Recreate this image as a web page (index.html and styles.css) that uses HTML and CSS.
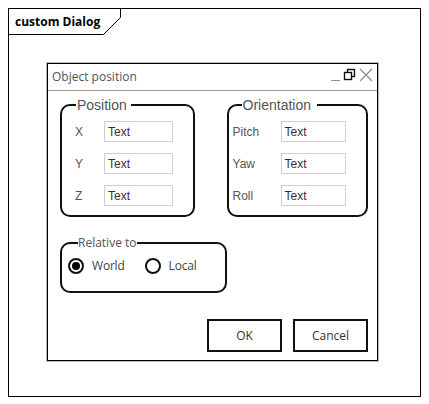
FILE: index.html
```html
<!DOCTYPE html>
<html lang="en">
<head>
<meta charset="utf-8">
<title>custom Dialog</title>
<link rel="stylesheet" href="styles.css">
</head>
<body>
<div class="frame">
  <div class="tab">
    <svg class="tab-outline" width="112" height="26" viewBox="0 0 112 26"><path d="M0 25.5H94.5L111.5 8.5V0" fill="none" stroke="#000" stroke-width="1"/></svg>
    <span class="tab-title">custom Dialog</span>
  </div>
  <div class="dialog">
    <div class="titlebar">
      <span class="title">Object position</span>
      <svg class="controls" width="46" height="26" viewBox="0 0 46 26">
        <path d="M2 16.5H11" stroke="#a08a8a" stroke-width="1" fill="none"/>
        <rect x="18.5" y="5.5" width="7" height="7" fill="#fff" stroke="#111" stroke-width="1.4"/>
        <rect x="15.5" y="8.5" width="7" height="7" fill="#fff" stroke="#111" stroke-width="1.4"/>
        <path d="M31 5L43 17M43 5L31 17" stroke="#8a8a8a" stroke-width="1.2" fill="none"/>
      </svg>
    </div>
    <div class="dialog-body">
      <div class="groups">
        <fieldset class="group group-position">
          <legend>Position</legend>
          <div class="rows">
            <div class="row"><span class="row-label">X</span><span class="field">Text</span></div>
            <div class="row"><span class="row-label">Y</span><span class="field">Text</span></div>
            <div class="row"><span class="row-label">Z</span><span class="field">Text</span></div>
          </div>
        </fieldset>
        <fieldset class="group group-orientation">
          <legend>Orientation</legend>
          <div class="rows">
            <div class="row"><span class="row-label">Pitch</span><span class="field">Text</span></div>
            <div class="row"><span class="row-label">Yaw</span><span class="field">Text</span></div>
            <div class="row"><span class="row-label">Roll</span><span class="field">Text</span></div>
          </div>
        </fieldset>
      </div>
      <fieldset class="group group-relative">
        <legend>Relative to</legend>
        <div class="radios">
          <span class="option"><span class="radio checked"></span><span class="option-label">World</span></span>
          <span class="option option-local"><span class="radio"></span><span class="option-label">Local</span></span>
        </div>
      </fieldset>
      <div class="buttons">
        <button class="btn">OK</button>
        <button class="btn">Cancel</button>
      </div>
    </div>
  </div>
</div>
</body>
</html>
```

FILE: styles.css
```css
body {
  margin: 8px;
  background: #fff;
  font-family: "Liberation Sans", Arial, sans-serif;
}

.frame {
  width: 411px;
  height: 387px;
  border: 1px solid #000;
}

.tab {
  position: relative;
  width: 112px;
  height: 26px;
}

.tab-outline {
  position: absolute;
  left: 0;
  top: 0;
}

.tab-title {
  display: block;
  padding-left: 6px;
  font: 700 12px/26px "Open Sans", sans-serif;
  color: #000;
}

.dialog {
  margin: 28px 0 0 38px;
  width: 329px;
  height: 296px;
  border: 1px solid #000;
  box-shadow: 0 0 0 1px #b8b8b8;
  display: flex;
  flex-direction: column;
}

.titlebar {
  height: 26px;
  border-bottom: 1px solid #a89494;
  display: flex;
  align-items: center;
  justify-content: space-between;
  padding: 0 2px 0 4px;
}

.title {
  font: 12px/26px "Open Sans", sans-serif;
  color: #555;
}

.controls {
  display: block;
}

.dialog-body {
  padding: 6px 9px 0 12px;
  display: flex;
  flex-direction: column;
}

.groups {
  display: flex;
  gap: 32px;
}

.group {
  margin: 0;
  padding: 0;
  border: 2px solid #111;
  border-radius: 10px;
  min-width: 0;
  box-sizing: border-box;
}

.group legend {
  padding: 0 4px 0 1px;
  font: 14px/16px "Liberation Sans", Arial, sans-serif;
  color: #555;
}

.group-position {
  width: 135px;
}

.group-position legend {
  margin-left: 14px;
}

.group-orientation {
  width: 142px;
}

.group-orientation legend {
  margin-left: 13px;
  padding-right: 6px;
}

.rows {
  display: flex;
  flex-direction: column;
  gap: 11px;
  padding: 8px 0 9px 13px;
}

.group-orientation .rows {
  padding-left: 4px;
}

.row {
  display: flex;
  align-items: center;
  height: 21px;
}

.row-label {
  width: 29px;
  font-size: 12px;
  color: #555;
}

.group-orientation .row-label {
  width: 48px;
}

.field {
  box-sizing: border-box;
  width: 69px;
  height: 21px;
  border: 1px solid #cfcfcf;
  padding: 2px 0 0 3px;
  font-size: 12px;
  line-height: 17px;
  color: #333;
}

.group-orientation .field {
  width: 65px;
}

.group-relative {
  width: 167px;
  margin-top: 19px;
}

.group-relative legend {
  margin-left: 16px;
  padding: 0;
  font: 12px/14px "Open Sans", sans-serif;
  color: #555;
}

.radios {
  display: flex;
  align-items: center;
  padding: 8px 0 17px 6px;
}

.option {
  display: flex;
  align-items: center;
  height: 16px;
}

.option-local {
  margin-left: 20px;
}

.radio {
  box-sizing: border-box;
  width: 16px;
  height: 16px;
  border: 2px solid #111;
  border-radius: 50%;
  display: flex;
  align-items: center;
  justify-content: center;
}

.radio.checked::after {
  content: "";
  width: 8px;
  height: 8px;
  border-radius: 50%;
  background: #000;
}

.option-label {
  margin-left: 8px;
  font: 12px/16px "Open Sans", sans-serif;
  color: #444;
  letter-spacing: -0.2px;
}

.buttons {
  display: flex;
  justify-content: flex-end;
  gap: 11px;
  margin-top: 26px;
}

.btn {
  box-sizing: border-box;
  width: 75px;
  height: 33px;
  border: 2px solid #111;
  background: #fff;
  font: 12px "Open Sans", sans-serif;
  color: #333;
  padding: 0;
}
```
